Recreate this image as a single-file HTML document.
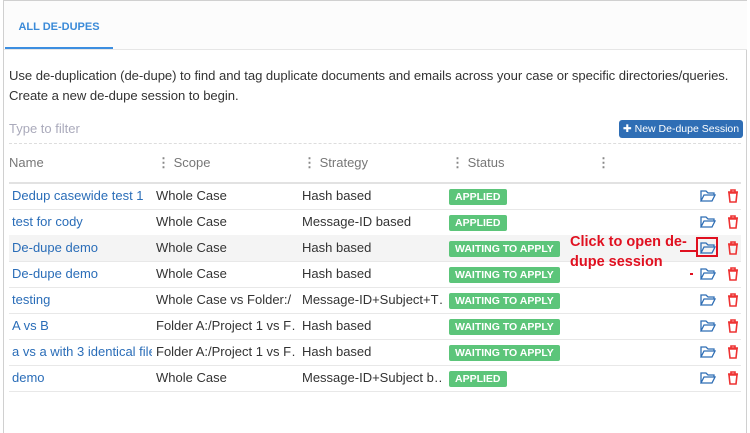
<!DOCTYPE html>
<html><head><style>
body{margin:0;width:750px;height:433px;background:#fff;font-family:"Liberation Sans",sans-serif;overflow:hidden;position:relative}
.frame{position:absolute;left:3px;top:0;width:744px;height:433px;border:1px solid #d0d0d0;border-bottom:none;box-sizing:border-box}
.tabbar{position:absolute;left:4px;top:1px;width:743px;height:48px;border-bottom:1px solid #e6e6e6;background:#fcfcfc}
.tab{position:absolute;left:5px;top:1px;width:108px;height:48px;border-bottom:2px solid #3c8ee0;box-sizing:border-box;color:#3a8ad8;font-weight:bold;font-size:11px;line-height:52px;text-align:center}
.desc{position:absolute;left:9px;top:66px;font-size:13.1px;color:#333;line-height:20px;letter-spacing:-0.05px}
.filter{position:absolute;left:9px;top:121px;font-size:13px;color:#aab}
.dash{position:absolute;left:9px;top:143px;width:732px;border-top:1px dashed #ddd}
.btn{position:absolute;left:619px;top:120px;width:124px;height:18px;background:#2f6eb5;border-radius:3px;color:#fff;font-size:10.5px;line-height:18px;text-align:center}
.h{position:absolute;top:155px;font-size:13px;color:#777}
.h b{color:#888;font-size:13px}
.hl{position:absolute;left:9px;top:182px;width:732px;border-top:2px solid #e2e2e2}
.row{position:absolute;left:9px;width:732px;height:26px;border-bottom:1px solid #e8e8e8;font-size:13px;color:#333;line-height:26px}
.row span{position:absolute;white-space:nowrap;overflow:hidden}
.n{left:3px;color:#2a6db8;width:140px}
.s{left:147px;width:140px}
.t{left:293px;width:140px}
.b{left:440px;top:6px;height:16px;line-height:16px;background:#5cc57a;color:#fff;font-weight:bold;font-size:10.5px;padding:0 6px;border-radius:2px}
.f{left:691px;top:3px}
.d{left:718px;top:3px}
</style></head><body>
<div class="frame"></div>
<div class="tabbar"></div>
<div class="tab">ALL DE-DUPES</div>
<div class="desc">Use de-duplication (de-dupe) to find and tag duplicate documents and emails across your case or specific directories/queries.<br>Create a new de-dupe session to begin.</div>
<div class="filter">Type to filter</div>
<div class="btn">✚ New De-dupe Session</div>
<div class="dash"></div>
<div class="h" style="left:9px">Name</div>
<div class="h" style="left:157px"><b>⋮</b> Scope</div>
<div class="h" style="left:303px"><b>⋮</b> Strategy</div>
<div class="h" style="left:451px"><b>⋮</b> Status</div>
<div class="h" style="left:597px"><b>⋮</b></div>
<div class="hl"></div>
<div class="row" style="top:183px"><span class="n">Dedup casewide test 1</span><span class="s">Whole Case</span><span class="t">Hash based</span><span class="b">APPLIED</span><span class="f"><svg width="16" height="14"><path d="M1 2h5l2 2h6v2H4L1 12V2zM1 12l3-6h11l-3 6z" fill="none" stroke="#2f6eb5" stroke-width="1.3"/></svg></span><span class="d"><svg width="12" height="14"><path d="M1 3h10M4 3V1h4v2M2 4h8l-1 9H3z" fill="none" stroke="#e33" stroke-width="1.6"/></svg></span></div>
<div class="row" style="top:209px"><span class="n">test for cody</span><span class="s">Whole Case</span><span class="t">Message-ID based</span><span class="b">APPLIED</span><span class="f"><svg width="16" height="14"><path d="M1 2h5l2 2h6v2H4L1 12V2zM1 12l3-6h11l-3 6z" fill="none" stroke="#2f6eb5" stroke-width="1.3"/></svg></span><span class="d"><svg width="12" height="14"><path d="M1 3h10M4 3V1h4v2M2 4h8l-1 9H3z" fill="none" stroke="#e33" stroke-width="1.6"/></svg></span></div>
<div class="row" style="top:235px;background:#f4f4f4"><span class="n">De-dupe demo</span><span class="s">Whole Case</span><span class="t">Hash based</span><span class="b">WAITING TO APPLY</span><span class="f"><svg width="16" height="14"><path d="M1 2h5l2 2h6v2H4L1 12V2zM1 12l3-6h11l-3 6z" fill="none" stroke="#2f6eb5" stroke-width="1.3"/></svg></span><span class="d"><svg width="12" height="14"><path d="M1 3h10M4 3V1h4v2M2 4h8l-1 9H3z" fill="none" stroke="#e33" stroke-width="1.6"/></svg></span></div>
<div class="row" style="top:261px"><span class="n">De-dupe demo</span><span class="s">Whole Case</span><span class="t">Hash based</span><span class="b">WAITING TO APPLY</span><span class="f"><svg width="16" height="14"><path d="M1 2h5l2 2h6v2H4L1 12V2zM1 12l3-6h11l-3 6z" fill="none" stroke="#2f6eb5" stroke-width="1.3"/></svg></span><span class="d"><svg width="12" height="14"><path d="M1 3h10M4 3V1h4v2M2 4h8l-1 9H3z" fill="none" stroke="#e33" stroke-width="1.6"/></svg></span></div>
<div class="row" style="top:287px"><span class="n">testing</span><span class="s">Whole Case vs Folder:/</span><span class="t">Message-ID+Subject+T…</span><span class="b">WAITING TO APPLY</span><span class="f"><svg width="16" height="14"><path d="M1 2h5l2 2h6v2H4L1 12V2zM1 12l3-6h11l-3 6z" fill="none" stroke="#2f6eb5" stroke-width="1.3"/></svg></span><span class="d"><svg width="12" height="14"><path d="M1 3h10M4 3V1h4v2M2 4h8l-1 9H3z" fill="none" stroke="#e33" stroke-width="1.6"/></svg></span></div>
<div class="row" style="top:313px"><span class="n">A vs B</span><span class="s">Folder A:/Project 1 vs F…</span><span class="t">Hash based</span><span class="b">WAITING TO APPLY</span><span class="f"><svg width="16" height="14"><path d="M1 2h5l2 2h6v2H4L1 12V2zM1 12l3-6h11l-3 6z" fill="none" stroke="#2f6eb5" stroke-width="1.3"/></svg></span><span class="d"><svg width="12" height="14"><path d="M1 3h10M4 3V1h4v2M2 4h8l-1 9H3z" fill="none" stroke="#e33" stroke-width="1.6"/></svg></span></div>
<div class="row" style="top:339px"><span class="n">a vs a with 3 identical files</span><span class="s">Folder A:/Project 1 vs F…</span><span class="t">Hash based</span><span class="b">WAITING TO APPLY</span><span class="f"><svg width="16" height="14"><path d="M1 2h5l2 2h6v2H4L1 12V2zM1 12l3-6h11l-3 6z" fill="none" stroke="#2f6eb5" stroke-width="1.3"/></svg></span><span class="d"><svg width="12" height="14"><path d="M1 3h10M4 3V1h4v2M2 4h8l-1 9H3z" fill="none" stroke="#e33" stroke-width="1.6"/></svg></span></div>
<div class="row" style="top:365px"><span class="n">demo</span><span class="s">Whole Case</span><span class="t">Message-ID+Subject b…</span><span class="b">APPLIED</span><span class="f"><svg width="16" height="14"><path d="M1 2h5l2 2h6v2H4L1 12V2zM1 12l3-6h11l-3 6z" fill="none" stroke="#2f6eb5" stroke-width="1.3"/></svg></span><span class="d"><svg width="12" height="14"><path d="M1 3h10M4 3V1h4v2M2 4h8l-1 9H3z" fill="none" stroke="#e33" stroke-width="1.6"/></svg></span></div>
<div style="position:absolute;left:570px;top:232px;color:#e01020;font-weight:bold;font-size:14.5px;line-height:20px">Click to open de-<br>dupe session</div>
<div style="position:absolute;left:680px;top:250px;width:17px;height:2px;background:#e01020"></div>
<div style="position:absolute;left:696px;top:237px;width:22px;height:20px;border:2px solid #e01020;box-sizing:border-box"></div>
<div style="position:absolute;left:690px;top:273px;width:3px;height:2px;background:#e01020"></div>
</body></html>
